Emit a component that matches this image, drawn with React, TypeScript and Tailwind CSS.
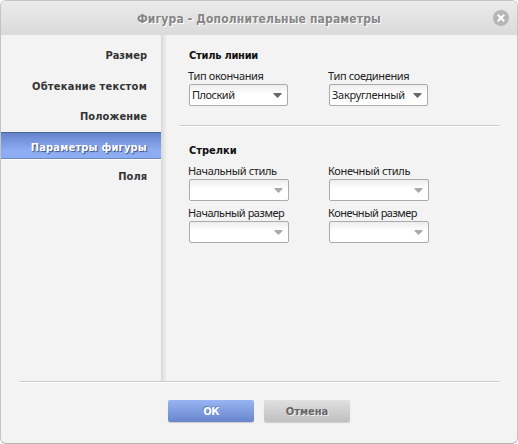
const bold = "font-['DejaVu_Sans_Condensed','DejaVu_Sans',sans-serif] font-bold [font-stretch:condensed]";
const regular = "font-['Noto_Sans','Open_Sans',sans-serif]";

type SelectProps = { label: string; value?: string; labelClass?: string; valueClass?: string };

function Select({ label, value, labelClass = 'tracking-[-0.35px]', valueClass = '' }: SelectProps) {
  return (
    <div className={`w-[140px] text-[11px] text-[#222] ${regular}`}>
      <div className="-ml-px flex h-4 items-center whitespace-nowrap">
        <span className={labelClass}>{label}</span>
      </div>
      <button
        className={`flex h-[22px] items-center justify-between rounded-[2px] border border-[#aaa] bg-linear-to-b from-[#ededed] via-white via-45% to-white pr-[5px] pl-[2px] text-left whitespace-nowrap ${value ? 'w-[99px]' : 'w-[100px]'}`}
      >
        <span className={valueClass}>{value}</span>
        <svg width="9" height="5" viewBox="0 0 9 5" className={`shrink-0 ${value ? 'text-[#686868]' : 'text-[#aaa]'}`}>
          <path d="M0.5 0h8v1L4.5 5 0.5 1z" fill="currentColor" />
        </svg>
      </button>
    </div>
  );
}

function Rule() {
  return <div className="h-[2px] border-t border-[#ccc] bg-white" />;
}

const items = [
  { name: 'Размер', cls: 'h-[30px]', track: '' },
  { name: 'Обтекание текстом', cls: 'h-[31px] pt-px', track: 'tracking-[0.25px]' },
  { name: 'Положение', cls: 'h-[30px]', track: 'tracking-[0.1px]' },
  {
    name: 'Параметры фигуры',
    cls: 'h-[27px] border-t border-b border-t-[#4d6395] border-b-[#6f88bd] bg-linear-to-b from-[#6684cc] to-[#8dacf2] to-70% text-white [text-shadow:1px_1px_1px_#394f80] shadow-[0_1px_0_#fff] pt-[5px]',
    track: 'tracking-[0.2px]',
  },
  { name: 'Поля', cls: 'h-[32px] pt-[4px]', track: '' },
];

export default function App() {
  return (
    <div className="flex h-[444px] w-[518px] flex-col overflow-hidden rounded-[6px] border border-[#c4c4c4] border-b-[#b5b5b5] bg-[#f3f3f3]">
      <header className="relative flex h-[34px] shrink-0 items-center justify-center bg-linear-to-b from-[#ebebeb] to-[#dadada]">
        <h1 className={`pt-[2px] text-[12px] whitespace-nowrap text-[#858585] [text-shadow:1px_1px_0_#fff] ${bold}`}>
          <span className="tracking-[0.15px]">Фигура - Дополнительные параметры</span>
        </h1>
        <button className="absolute top-[9px] right-[8px] flex size-4 items-center justify-center rounded-full bg-[#b5b5b5]">
          <svg width="8" height="8" viewBox="0 0 8 8" stroke="#fff" strokeWidth="2">
            <path d="M0.8 0.8l6.4 6.4M7.2 0.8L0.8 7.2" />
          </svg>
        </button>
      </header>

      <div className="flex h-[346px] shrink-0">
        <nav className={`w-[160px] pt-[6px] text-[11px] text-[#333] ${bold}`}>
          {items.map((item) => (
            <div key={item.name} className={`flex items-center justify-end pr-[14px] whitespace-nowrap ${item.cls}`}>
              <span className={item.track}>{item.name}</span>
            </div>
          ))}
        </nav>
        <div className="w-[6px] bg-linear-to-r from-[#d8d8d8] to-[#f3f3f3]" />
        <main className="w-[332px] pl-[12px]">
          <section className="h-[90px] pt-[13px] pl-[10px]">
            <h2 className={`h-[20px] text-[11px] leading-4 text-[#111] ${bold}`}>
              <span className="tracking-[-0.25px]">Стиль линии</span>
            </h2>
            <div className="flex">
              <Select label="Тип окончания" value="Плоский" valueClass="tracking-[-0.5px]" />
              <Select label="Тип соединения" value="Закругленный" valueClass="tracking-[-0.25px]" />
            </div>
          </section>
          <Rule />
          <section className="pt-[16px] pl-[10px]">
            <h2 className={`h-[20px] text-[11px] leading-4 text-[#111] ${bold}`}>
              <span>Стрелки</span>
            </h2>
            <div className="grid grid-cols-[140px_140px] gap-y-1">
              <Select label="Начальный стиль" />
              <Select label="Конечный стиль" />
              <Select label="Начальный размер" labelClass="tracking-[-0.45px]" />
              <Select label="Конечный размер" labelClass="tracking-[-0.5px]" />
            </div>
          </section>
        </main>
      </div>

      <footer className="px-[18px]">
        <Rule />
        <div className={`flex justify-center gap-[10px] pt-[17px] text-[11px] ${bold}`}>
          <button className="h-[22px] w-[86px] rounded-[2px] bg-linear-to-b from-[#98b4f2] to-[#6886cd] pt-[2px] text-white shadow-[0_1px_1px_#ccc] [text-shadow:-1px_-1px_0_#6280c5]">
            <span className="tracking-[-0.5px]">ОК</span>
          </button>
          <button className="h-[22px] w-[86px] rounded-[2px] bg-linear-to-b from-[#e0e0e0] to-[#c0c0c0] pt-[2px] text-[#666] shadow-[0_1px_1px_#ccc] [text-shadow:1px_1px_0_#eee]">
            <span>Отмена</span>
          </button>
        </div>
      </footer>
    </div>
  );
}
